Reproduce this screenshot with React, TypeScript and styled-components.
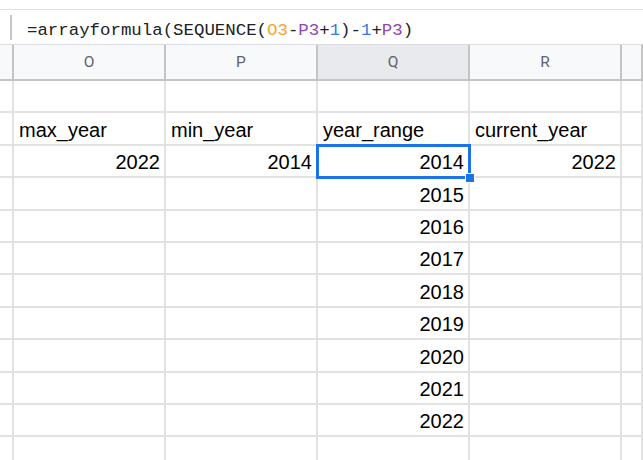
import React from "react";
import styled, { createGlobalStyle, css } from "styled-components";

const GlobalStyle = createGlobalStyle`
  body {
    margin: 0;
    background: #ffffff;
    overflow: hidden;
  }
`;

const Page = styled.div`
  width: 643px;
  height: 460px;
  padding-top: 9px;
  box-sizing: border-box;
  overflow: hidden;
  background: #fff;
`;

const FormulaBar = styled.div`
  display: flex;
  align-items: center;
  height: 34px;
  border-top: 1px solid #e1e1e1;
`;

const Divider = styled.div`
  width: 2px;
  height: 25px;
  margin-left: 10px;
  background: #c7c7c7;
`;

const Formula = styled.div`
  margin-left: 15px;
  padding-top: 7px;
  font-family: "Liberation Mono", "DejaVu Sans Mono", monospace;
  font-size: 17.4px;
  line-height: 20px;
  color: #202124;
  white-space: pre;
`;

const Token = styled.span<{ $tone: "ref1" | "ref2" | "num" }>`
  color: ${(p) =>
    p.$tone === "ref1" ? "#f5a42c" : p.$tone === "ref2" ? "#9145b0" : "#2f7de1"};
`;

const Sheet = styled.div`
  display: grid;
  grid-template-columns: 14px repeat(4, 152px) 1fr;
  grid-template-rows: 36px;
  grid-auto-rows: 32.4px;
  border-top: 1px solid #dadce0;
`;

const HeadCell = styled.div<{ $active?: boolean }>`
  display: flex;
  align-items: center;
  justify-content: center;
  background: ${(p) => (p.$active ? "#e8eaed" : "#f8f9fa")};
  border-right: 2px solid #c4c4c4;
  border-bottom: 2px solid #c4c4c4;
  font-family: Roboto, "Liberation Sans", sans-serif;
  font-size: 15.5px;
  color: #5f6368;
`;

const Cell = styled.div<{ $num?: boolean; $selected?: boolean }>`
  position: relative;
  display: flex;
  align-items: flex-end;
  justify-content: ${(p) => (p.$num ? "flex-end" : "flex-start")};
  padding: 0 4px 2px 5px;
  border-right: 2px solid #e2e2e2;
  border-bottom: 2px solid #e2e2e2;
  font-family: "Liberation Sans", Arial, sans-serif;
  font-size: 20px;
  line-height: 23px;
  color: #000;
  white-space: nowrap;
  ${(p) =>
    p.$selected &&
    css`
      z-index: 2;
      &::before {
        content: "";
        position: absolute;
        top: -2px;
        left: -2px;
        right: -3px;
        bottom: -3px;
        border: 3px solid #1a73e8;
      }
      &::after {
        content: "";
        position: absolute;
        right: -7px;
        bottom: -7px;
        width: 8px;
        height: 8px;
        background: #1a73e8;
        border: 1px solid #fff;
      }
    `}
`;

const columns = ["O", "P", "Q", "R", ""];

type Row = (string | number | null)[];

const rows: Row[] = [
  [null, null, null, null, null],
  ["max_year", "min_year", "year_range", "current_year", null],
  [2022, 2014, 2014, 2022, null],
  ...[2015, 2016, 2017, 2018, 2019, 2020, 2021, 2022].map(
    (y): Row => [null, null, y, null, null]
  ),
  [null, null, null, null, null],
];

const App = () => {
  return (
    <Page>
      <GlobalStyle />
      <FormulaBar>
        <Divider />
        <Formula>
          =arrayformula(SEQUENCE(<Token $tone="ref1">O3</Token>-
          <Token $tone="ref2">P3</Token>+<Token $tone="num">1</Token>)-
          <Token $tone="num">1</Token>+<Token $tone="ref2">P3</Token>)
        </Formula>
      </FormulaBar>
      <Sheet>
        <HeadCell />
        {columns.map((c) => (
          <HeadCell key={c || "S"} $active={c === "Q"}>
            {c}
          </HeadCell>
        ))}
        {rows.map((row, r) => (
          <React.Fragment key={r}>
            <Cell />
            {row.map((v, c) => (
              <Cell
                key={c}
                $num={typeof v === "number"}
                $selected={r === 2 && c === 2}
              >
                {v}
              </Cell>
            ))}
          </React.Fragment>
        ))}
      </Sheet>
    </Page>
  );
};

export default App;
